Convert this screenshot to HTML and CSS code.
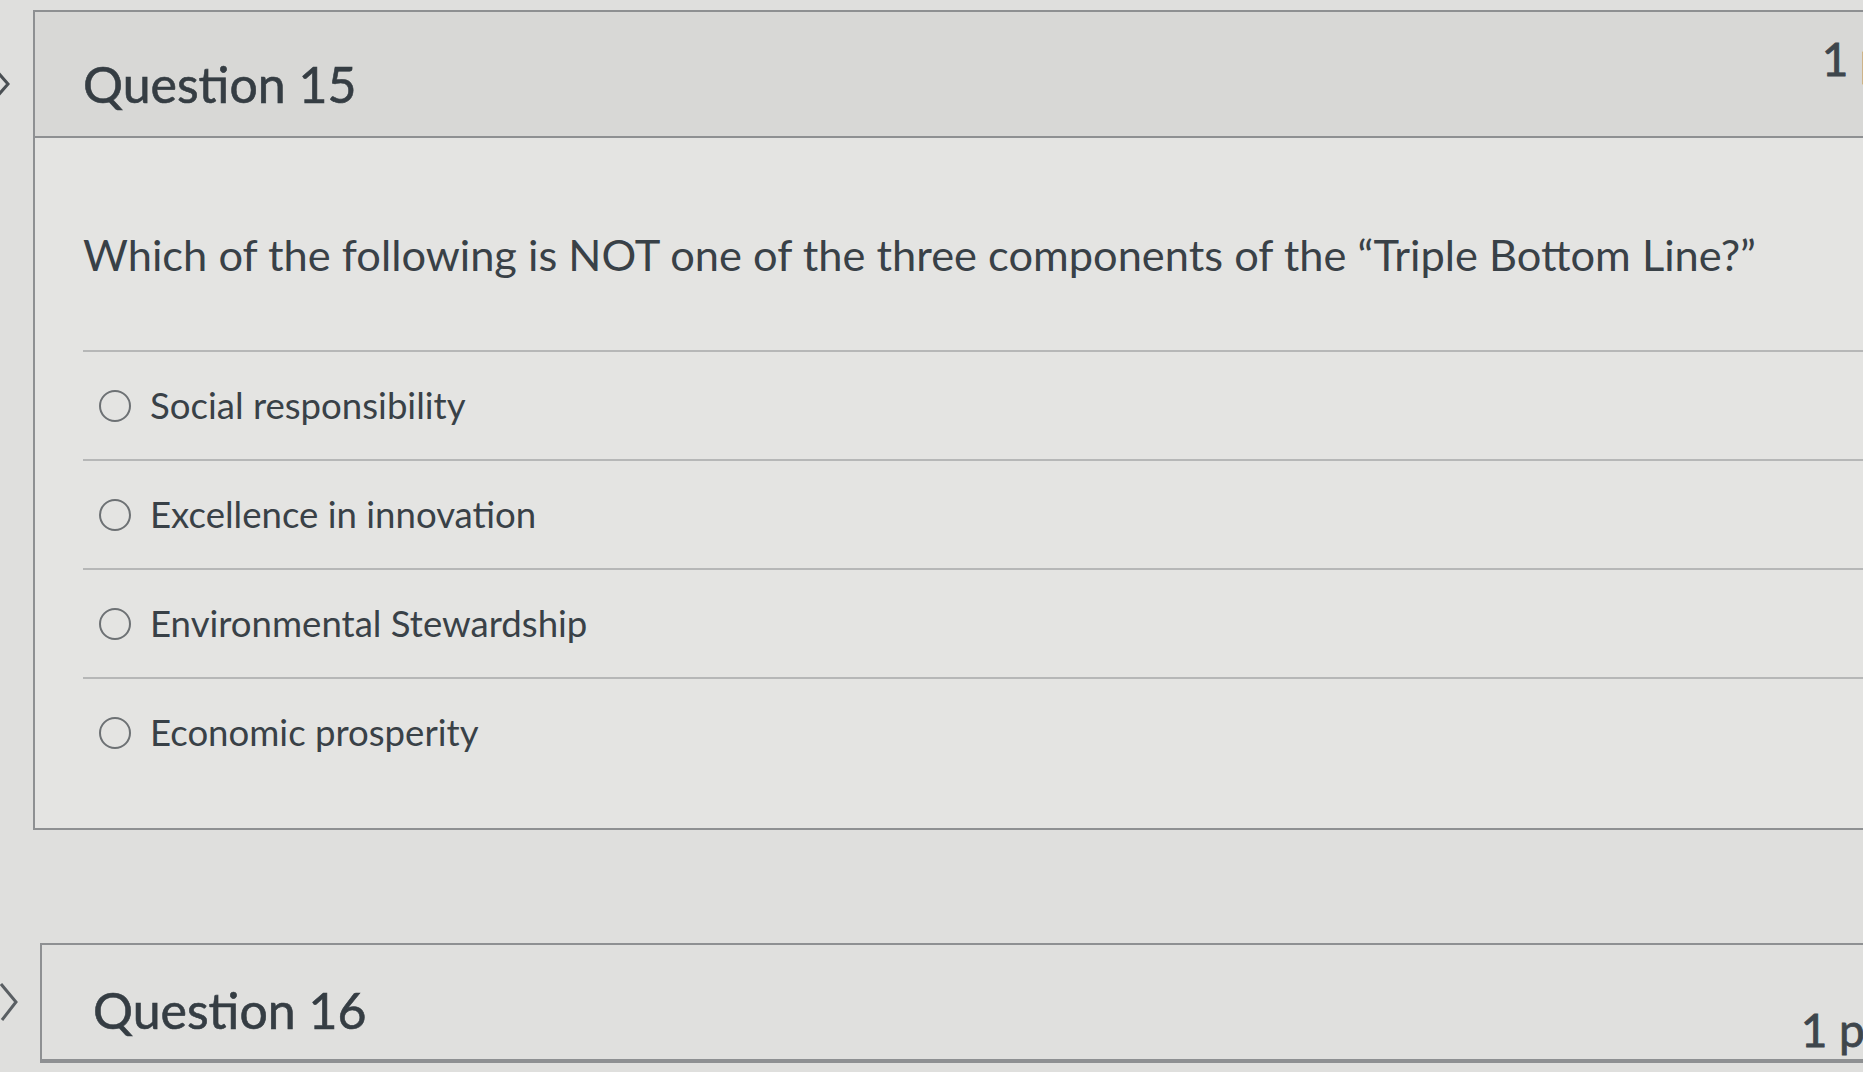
FILE: index.html
```html
<!DOCTYPE html>
<html lang="en">
<head>
<meta charset="utf-8">
<title>Quiz</title>
<link rel="stylesheet" href="styles.css">
</head>
<body>
<div class="page">
  <svg class="chevron chevron-top" width="16" height="36" viewBox="0 0 16 36"><path d="M-6 2 L8 18 L-6 34" fill="none" stroke="#4a4f53" stroke-width="3"/></svg>
  <svg class="chevron chevron-bottom" width="20" height="40" viewBox="0 0 20 40"><path d="M1 2 L16 20 L2 38" fill="none" stroke="#5a5f63" stroke-width="3"/></svg>

  <section class="card card-first">
    <header class="card-header">
      <h2 class="q-title">Question 15</h2>
      <span class="q-points q-points-first">1 pts</span>
    </header>
    <div class="card-body">
      <p class="q-text">Which of the following is NOT one of the three components of the “Triple Bottom Line?”</p>
      <div class="answers">
        <label class="answer"><span class="radio"></span><span class="answer-label">Social responsibility</span></label>
        <label class="answer"><span class="radio"></span><span class="answer-label">Excellence in innovation</span></label>
        <label class="answer"><span class="radio"></span><span class="answer-label">Environmental Stewardship</span></label>
        <label class="answer"><span class="radio"></span><span class="answer-label">Economic prosperity</span></label>
      </div>
    </div>
  </section>

  <section class="card card-second">
    <header class="card-header card-header-second">
      <h2 class="q-title">Question 16</h2>
      <span class="q-points q-points-second">1 pts</span>
    </header>
  </section>
</div>
</body>
</html>
```

FILE: styles.css
```css
html, body {
  margin: 0;
  padding: 0;
}
body {
  background: #dfdfdd;
  font-family: Lato, "Open Sans", "Liberation Sans", sans-serif;
  color: #394147;
  overflow: hidden;
  width: 1863px;
  height: 1072px;
}
.page {
  position: relative;
  padding-top: 10px;
  height: 1062px;
}
.chevron {
  position: absolute;
  left: 0;
}
.chevron-top {
  top: 66px;
}
.chevron-bottom {
  top: 982px;
}
.card {
  border: 2px solid #8e9092;
  background: #e4e4e2;
  box-sizing: border-box;
}
.card-first {
  margin-left: 33px;
  width: 1915px;
}
.card-second {
  margin-left: 40px;
  margin-top: 113px;
  width: 1887px;
}
.card-header {
  display: flex;
  align-items: center;
  justify-content: space-between;
  height: 126px;
  box-sizing: border-box;
  padding: 20px 24px 0 48px;
  background: #d8d8d6;
  border-bottom: 2px solid #8e9092;
}
.card-header-second {
  height: 116px;
  padding-top: 16px;
  padding-left: 51px;
  background: #e0e0de;
}
.q-title {
  margin: 0;
  font-size: 50px;
  font-weight: 400;
  line-height: 1.2;
  color: #353d43;
  -webkit-text-stroke: 0.6px #353d43;
}
.q-points {
  font-size: 46px;
  line-height: 1.2;
  color: #3e464c;
  -webkit-text-stroke: 0.8px #3e464c;
}
.q-points-first {
  margin-bottom: 50px;
}
.q-points-second {
  margin-top: 40px;
}
.card-body {
  padding: 90px 0 42px 48px;
}
.q-text {
  margin: 0;
  font-size: 43.4px;
  line-height: 1.2;
  color: #394147;
}
.answers {
  margin-top: 70px;
}
.answer {
  display: flex;
  align-items: center;
  height: 109px;
  border-top: 2px solid #b6b7b7;
  box-sizing: border-box;
}
.radio {
  width: 32px;
  height: 32px;
  border-radius: 50%;
  border: 2px solid #6d7174;
  box-sizing: border-box;
  margin-left: 16px;
  margin-right: 19px;
  flex: none;
}
.answer-label {
  font-size: 36.6px;
  line-height: 1.2;
  color: #394147;
}
```
